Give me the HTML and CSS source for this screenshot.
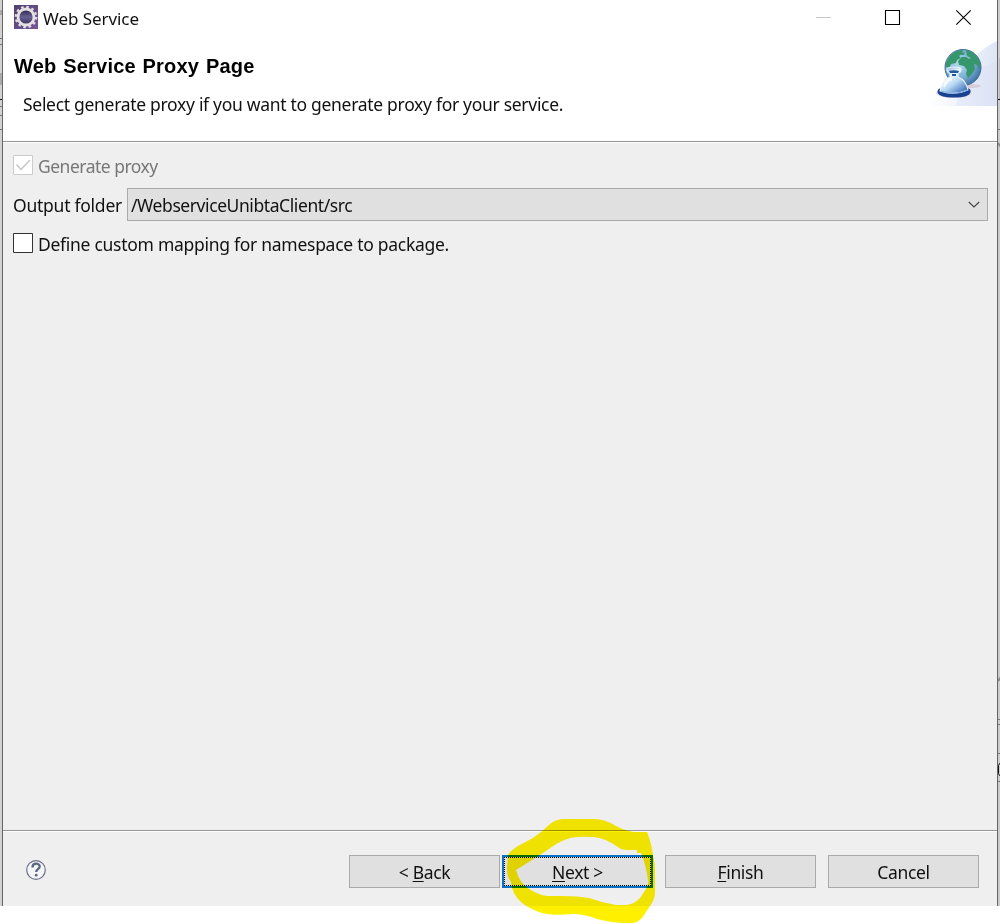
FILE: index.html
```html
<!DOCTYPE html>
<html lang="en">
<head>
<meta charset="utf-8">
<title>Web Service</title>
<link rel="stylesheet" href="styles.css">
</head>
<body>
<div class="screen">
  <svg class="edge edge-left" width="2" height="906"><path d="M0 0H2V906H0Z" fill="#d2d2d2"/><path d="M0 10h2v5H0zM0 73h2v12H0z" fill="#aaa"/><path d="M0 38.5h2M0 44.5h2M0 106.5h2M0 115.5h2M0 129.5h2" stroke="#777"/><path d="M0 99.5h2" stroke="#111"/></svg>
  <main class="dialog">
    <header class="titlebar">
      <svg class="app-icon" width="24" height="24" viewBox="0 0 24 24">
        <defs><linearGradient id="app" x2="1" y2="1"><stop stop-color="#4f416c"/><stop offset="1" stop-color="#77569d"/></linearGradient><linearGradient id="core" x2="0" y2="1"><stop stop-color="#292443"/><stop offset=".5" stop-color="#655b91"/><stop offset="1" stop-color="#393257"/></linearGradient></defs>
        <path fill="url(#app)" d="M0 0h24v24H0z"/>
        <circle cx="12" cy="12" r="10.2" fill="none" stroke="#e3dfe0" stroke-width="2.2" stroke-dasharray="2.6 2.741"/>
        <circle cx="12" cy="12" r="8" fill="url(#core)" stroke="#e5e1e2" stroke-width="2.8"/>
        <path d="M6 11h12M6 13h12" stroke="#81779f" stroke-width=".5" opacity=".5"/>
      </svg>
      <span class="title">Web Service</span>
      <svg class="controls" width="160" height="36" viewBox="0 0 160 36" fill="none"><path d="M0 17.5h15" stroke="#c8c8c8"/><path d="M69.5 10.5h14v14h-14z" stroke="#000" stroke-width="1.1"/><path d="M140.3 10.3l14.4 14.4M154.7 10.3l-14.4 14.4" stroke="#000" stroke-width="1.1"/></svg>
    </header>
    <section class="banner">
      <div class="banner-copy"><h1>Web Service Proxy Page</h1><p>Select generate proxy if you want to generate proxy for your service.</p></div>
      <svg class="globe" width="80" height="70" viewBox="0 0 80 70">
        <defs>
          <linearGradient id="sky"><stop stop-color="#fff"/><stop offset=".5" stop-color="#f0f3fc"/><stop offset="1" stop-color="#dfe5f5"/></linearGradient>
          <radialGradient id="sea" cx=".4" cy=".4" r=".65"><stop stop-color="#b8dff0"/><stop offset=".6" stop-color="#79afd2"/><stop offset="1" stop-color="#3d6ea3"/></radialGradient>
          <linearGradient id="bell" x2=".75" y2="1"><stop stop-color="#6299d8"/><stop offset=".4" stop-color="#edf7ff"/><stop offset=".65" stop-color="#b8d8f3"/><stop offset="1" stop-color="#4175bd"/></linearGradient>
          <clipPath id="earth"><circle cx="43" cy="27.5" r="17.5"/></clipPath>
        </defs>
        <path d="M7 66C29 54 45 16 77 1V66Z" fill="url(#sky)"/><path d="M45 31q16-3 32-10v45H36Z" fill="#d6def4" opacity=".35"/>
        <ellipse cx="48" cy="46" rx="13" ry="2" fill="#d7ccda"/>
        <circle cx="43" cy="27.5" r="18" fill="url(#sea)" stroke="#416f96"/>
        <g clip-path="url(#earth)" fill="#37976c"><path d="M26 23l4-8 8-5h5l-1 4-3 2 2 2-4 2-1 3-5 1-2 4-3-1Z"/><path d="M46 10l6 1 6 5 3 9-1 4-3-4-3-1 1 5-3 5-4 4-2-4 1-4-3-4-5-1-1-4 4-4 4 0 3 2 2-1-4-2Z"/><path d="M42 13l3-1-1 3-3 0Z"/></g>
        <ellipse cx="34" cy="53" rx="18" ry="4.8" fill="#e2dbeb"/>
        <path d="M17.5 52q0-4 5-4h23q6 0 5 4-1 5.5-16.5 5.5T17.5 52Z" fill="#18418f"/>
        <path d="M20 51q2-11 10-14v-4q-3 0-3-4 0-2 7-2t7 2q0 4-3 4v4q8 3 10 13-14 6-28 1Z" fill="url(#bell)" stroke="#edf5f8" stroke-width="1.1"/>
        <path d="M29 31q5-1.5 10 0l-1 2h-8ZM32 34h4v2h-4Z" fill="#24599c"/><path d="M24 47q2-7 8-8" stroke="#fff" stroke-width="2.3" fill="none" opacity=".75"/><path d="M21 51q13 5 27-1" stroke="#7faae0" fill="none"/>
      </svg>
    </section>
    <section class="content">
      <div class="check-row muted"><svg width="20" height="20" fill="none"><path d="M.5.5h19v19H.5z" fill="#fff" stroke="#ccc"/><path d="M3.5 9.5l4.5 5 9-9.5" stroke="#c4c4c4" stroke-width="1.4"/></svg><span class="generate">Generate proxy</span></div>
      <div class="folder-row"><span class="folder-label">Output folder</span><div class="combo"><span class="folder-value">/WebserviceUnibtaClient/src</span><svg width="12" height="8" viewBox="0 0 12 8"><path d="M.8 1l5.2 5 5.2-5" fill="none" stroke="#444" stroke-width="1.2"/></svg></div></div>
      <div class="check-row"><svg width="20" height="20"><path d="M.5.5h19v19H.5z" fill="#fff" stroke="#333"/></svg><span class="mapping">Define custom mapping for namespace to package.</span></div>
    </section>
    <footer class="footer">
      <svg class="help" width="22" height="22" viewBox="0 0 22 22" fill="none"><circle cx="11" cy="11" r="9.3" fill="#f5f5f7" stroke="#69718c" stroke-width="1.2"/><path d="M7.5 8.4c0-5 7.2-4.6 7.2-.8 0 2.5-3.5 2.7-3.5 5.3" stroke="#596583" stroke-width="2.3"/><circle cx="11.2" cy="16.2" r="1.4" fill="#596583"/></svg>
      <div class="buttons"><div class="button"><span>&lt; <u>B</u>ack</span></div><div class="button selected"><span><u>N</u>ext &gt;</span></div><div class="button finish"><span><u>F</u>inish</span></div><div class="button cancel"><span>Cancel</span></div></div>
    </footer>
  </main>
  <svg class="edge edge-right" width="3" height="906"><path d="M0 0h3v906H0z" fill="#ccc"/><path d="M1 58h2v42H1z" fill="#b9b9b9"/><path d="M0 99.5h3" stroke="#000"/><path d="M0 129.5h3M0 719.5h3M0 724.5h3M0 753.5h3M0 781.5h3" stroke="#777"/><path d="M0 143l3 4M0 681l3-4" stroke="#888" stroke-width="2"/><path d="M3 763.5H1.5l-1 2v8l1 2H3" fill="none" stroke="#111"/></svg>
  <svg class="highlight" width="1000" height="924"><path fill-rule="evenodd" fill="#fff000" d="M508 855Q510 851 518 846L533 838Q543 831 550 824Q556 819 565 819H594Q605 819 616 826Q627 832 638 832H647Q652 845 653 856Q655 861 655 872V893Q655 899 650 906L642 918Q637 923 632 923H625Q613 923 597 919Q584 914 573 914Q553 916 542 913Q529 909 521 902Q512 894 511 882Q507 877 507 868ZM516 870Q529 862 546 851Q559 841 570 838Q579 836 594 837Q605 838 618 847Q621 850 628 850L637 850V853H641Q646 864 648 880Q649 884 646 889L640 898Q634 905 625 905H616Q603 903 589 898Q578 896 562 896H547Q534 894 524 885Q519 880 516 870Z"/></svg>
</div>
</body>
</html>
```
FILE: styles.css
```css
body{margin:0;background:#fff;color:#111;font:17.5px/24px "Noto Sans","Open Sans",sans-serif}
.screen{position:relative;display:flex;width:1000px;height:924px;overflow:hidden}
.dialog{display:flex;flex-direction:column;box-sizing:border-box;width:996px;height:906px;border-left:1px solid #666;border-right:1px solid #666;background:#efefef}
.edge{flex:none}
.edge-left{width:2px}.edge-right{width:2px}
.titlebar{display:flex;align-items:flex-start;height:36px;background:#fff}
.app-icon{margin:5px 0 0 11px}
.title{margin:7px 0 0 5px;font-size:17px;letter-spacing:-.06px}
.controls{margin-left:auto;margin-right:21px}
.banner{display:flex;justify-content:space-between;height:105px;background:#fff;border-bottom:1px solid #969696}
.banner-copy{padding:17px 0 0 11px;white-space:nowrap}
h1{margin:0;font:bold 20px/26px "Liberation Sans",Arial,sans-serif;letter-spacing:.2px;word-spacing:1px;color:#000}
p{margin:13px 0 0 9px;letter-spacing:-.3px}
.globe{margin-top:4px;margin-right:-3px}
.content{display:flex;flex-direction:column;box-sizing:border-box;padding:12px 9px 0 10px;height:688px;border-top:1px solid #fff;white-space:nowrap}
.check-row{display:flex;align-items:flex-start;gap:5px;height:33px}
.check-row span{margin-top:-1px}
.generate{letter-spacing:-.5px}
.mapping{letter-spacing:-.28px}
.muted{color:#777}
.folder-row{display:flex;align-items:center;height:33px;margin-bottom:12px}
.folder-label{width:114px;letter-spacing:-.25px}
.folder-value{letter-spacing:-.42px}
.combo{display:flex;align-items:center;justify-content:space-between;box-sizing:border-box;flex:1;height:33px;padding:0 7px 0 3px;border:1px solid #aaa;background:#e0e0e0}
.footer{display:flex;justify-content:space-between;box-sizing:border-box;height:76px;border-top:1px solid #969696;box-shadow:inset 0 1px #fff}
.help{margin:28px 0 0 22px}
.buttons{display:flex;margin:24px 18px 0 0;letter-spacing:-.35px}
.button{display:flex;align-items:center;justify-content:center;box-sizing:border-box;width:151px;height:33px;border:1px solid #aaa;background:#e0e0e0}
.button u{text-decoration-thickness:1px;text-underline-offset:2px}
.selected{margin-left:2px;border:2px solid #0b71c6;outline:1px dotted #000;outline-offset:-3px}
.finish,.cancel{margin-left:12px}
.highlight{position:absolute;inset:0;mix-blend-mode:multiply;pointer-events:none}
```
